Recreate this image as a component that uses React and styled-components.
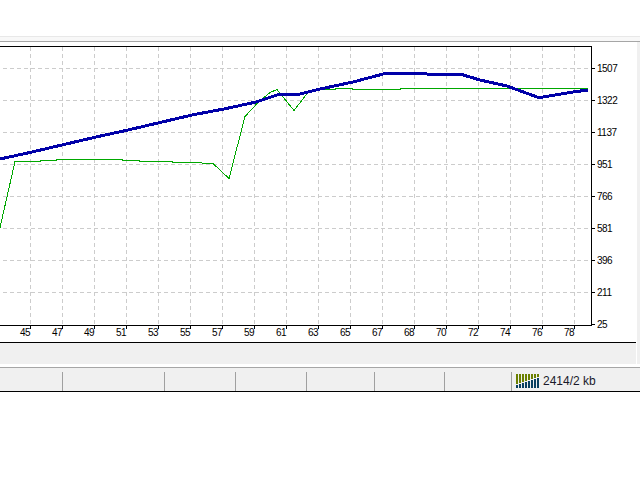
import React from 'react';
import styled, { createGlobalStyle } from 'styled-components';

const X_LABELS = ['45', '47', '49', '51', '53', '55', '57', '59', '61', '63', '65', '67', '68', '70', '72', '74', '76', '78'];
const Y_LABELS = ['1507', '1322', '1137', '951', '766', '581', '396', '211', '25'];
const STATUS_CELLS = [63, 102, 71, 71, 68, 70, 67];

const V_GRID = [30, 62, 94, 126, 158, 190, 222, 254, 286, 318, 350, 382, 414, 446, 478, 510, 542, 574];
const H_GRID = [21, 53, 85, 117, 149, 181, 213, 245];

// chart coordinates start at the top border of the plot (y = 47 on the page)
const toPoints = (pts, top = 47) => pts.map(([x, y]) => `${x},${y - top}`).join(' ');

const BALANCE = toPoints([
    [0, 159], [32, 152], [64, 144.5], [96, 137], [128, 130], [160, 122.5], [192, 115], [224, 109],
    [256, 102], [277, 95], [300, 94], [320, 89], [353, 82], [387, 73], [423, 73], [427, 74], [460, 74],
    [480, 80], [507, 86], [537, 97], [543, 97], [573, 92], [588, 90],
]);

const EQUITY = toPoints([
    [0, 228], [15, 162], [40, 162], [41, 161], [56, 161], [57, 160], [122, 160], [123, 161], [139, 161],
    [140, 162], [172, 162], [173, 163], [190, 163], [213, 164], [229, 179], [245, 117], [258, 103],
    [270, 93], [277, 90], [294, 111], [308, 93], [320, 90], [335, 90], [336, 89], [352, 89], [353, 90],
    [400, 90], [401, 89], [588, 89],
], 47.5);

const GlobalStyle = createGlobalStyle`
    html, body {
        margin: 0;
        padding: 0;
        background: #fff;
    }
`;

const Page = styled.div`
    width: 640px;
    height: 480px;
    overflow: hidden;
    display: flex;
    flex-direction: column;
    font-family: "Liberation Sans", sans-serif;
    font-size: 10px;
    color: #000;
`;

const TopSpace = styled.div`
    height: 36px;
`;

const ToolStrip = styled.div`
    height: 4px;
    background: #f8f8f8;
    border-top: 1px solid #e8e8e8;
    border-bottom: 1px solid #a6a6a6;
`;

const Workspace = styled.div`
    height: 322px;
    display: flex;
    background: #f0f0f0;
`;

const ChartWindow = styled.div`
    width: 636px;
    background: #fff;
    border-right: 1px solid #fff;
    display: flex;
    flex-direction: column;
`;

const ChartArea = styled.div`
    padding-top: 4px;
    display: flex;
    flex-direction: column;
    flex: none;
`;

const ChartRow = styled.div`
    display: flex;
    height: 280px;
`;

const Plot = styled.div`
    width: 592px;
    height: 280px;
    border-top: 1px solid #000;
    border-bottom: 1px solid #000;
    border-right: 1px solid #000;
    box-sizing: border-box;
    flex: none;
`;

const YAxis = styled.div`
    position: relative;
    flex: 1;
`;

const YLabel = styled.div`
    position: absolute;
    left: 5px;
    top: ${(p) => 16 + p.$index * 32}px;
    line-height: 14px;
    letter-spacing: -0.5px;

    &::before {
        content: '';
        position: absolute;
        left: -5px;
        top: 6px;
        width: 3px;
        height: 1px;
        background: #000;
    }
`;

const XAxis = styled.div`
    display: flex;
    height: 16px;
`;

const XLabel = styled.div`
    position: relative;
    flex: 0 0 32px;
    box-sizing: border-box;
    padding-right: 1px;
    text-align: right;
    line-height: 14px;
    letter-spacing: -0.5px;

    &:first-child {
        flex-basis: 31px;
    }

    &::before {
        content: '';
        position: absolute;
        right: 0;
        top: 0;
        width: 1px;
        height: 3px;
        background: #000;
    }
`;

const WindowFooter = styled.div`
    flex: 1;
    background: #f0f0f0;
    border-top: 1px solid #000;
`;

const Gap = styled.div`
    height: 3px;
    background: #fff;
`;

const StatusBar = styled.div`
    height: 23px;
    display: flex;
    align-items: flex-end;
    background: #f0f0f0;
    border-top: 1px solid #a6a6a6;
    border-bottom: 1px solid #000;
`;

const StatusCell = styled.div`
    width: ${(p) => p.$width}px;
    height: 19px;
    flex: none;
    box-sizing: border-box;
    border-right: 1px solid #a0a0a0;
`;

const Traffic = styled.div`
    align-self: center;
    display: flex;
    align-items: center;
    gap: 3px;
    padding: 3px 0 0 4px;
    font-size: 12px;
    color: #1a1a2a;
`;

const TrafficIcon = () => (
    <svg width="24" height="14" viewBox="0 0 24 14" shapeRendering="crispEdges">
        {[3, 4, 5, 6, 7, 8, 9, 10].map((h, i) => (
            <g key={i}>
                <rect x={i * 3} y="0" width="2" height={13 - h} fill="#6b8000" />
                <rect x={i * 3} y={14 - h} width="2" height={h} fill="#0a4060" />
            </g>
        ))}
    </svg>
);

const App = () => (
    <Page>
        <GlobalStyle />
        <TopSpace />
        <ToolStrip />
        <Workspace>
            <ChartWindow>
                <ChartArea>
                    <ChartRow>
                        <Plot>
                            <svg width="591" height="278" viewBox="0 0 591 278">
                                <g stroke="#cccccc" strokeWidth="1" strokeDasharray="4 3">
                                    {V_GRID.map((x) => (
                                        <line key={x} x1={x + 0.5} y1="0" x2={x + 0.5} y2="278" />
                                    ))}
                                    {H_GRID.map((y) => (
                                        <line key={y} x1="3" y1={y + 0.5} x2="591" y2={y + 0.5} />
                                    ))}
                                </g>
                                <polyline points={EQUITY} fill="none" stroke="#00a800" strokeWidth="1" shapeRendering="crispEdges" />
                                <polyline points={BALANCE} fill="none" stroke="#0000a8" strokeWidth="3" shapeRendering="crispEdges" />
                            </svg>
                        </Plot>
                        <YAxis>
                            {Y_LABELS.map((label, i) => (
                                <YLabel key={label} $index={i}>{label}</YLabel>
                            ))}
                        </YAxis>
                    </ChartRow>
                    <XAxis>
                        {X_LABELS.map((label) => (
                            <XLabel key={label}>{label}</XLabel>
                        ))}
                    </XAxis>
                </ChartArea>
                <WindowFooter />
            </ChartWindow>
        </Workspace>
        <Gap />
        <StatusBar>
            {STATUS_CELLS.map((w, i) => (
                <StatusCell key={i} $width={w} />
            ))}
            <Traffic>
                <TrafficIcon />
                <span>2414/2 kb</span>
            </Traffic>
        </StatusBar>
    </Page>
);

export default App;
